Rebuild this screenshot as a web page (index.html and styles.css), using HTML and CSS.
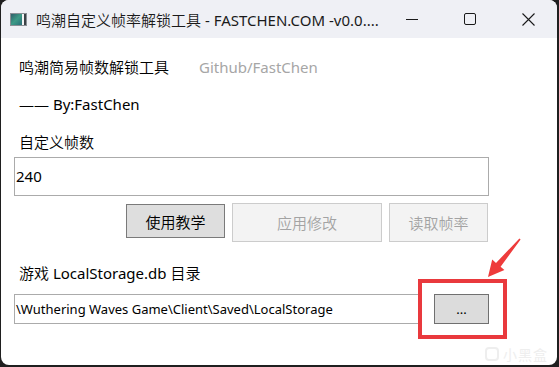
FILE: index.html
```html
<!DOCTYPE html>
<html lang="zh-CN">
<head>
<meta charset="utf-8">
<title>鸣潮自定义帧率解锁工具</title>
<link rel="stylesheet" href="styles.css">
</head>
<body>
<div class="window">
  <div class="titlebar">
    <svg class="appicon" width="17" height="13" viewBox="0 0 17 13">
      <defs>
        <linearGradient id="g1" x1="0" y1="0" x2="1" y2="1">
          <stop offset="0" stop-color="#2f5f6a"/>
          <stop offset="0.5" stop-color="#3c9a86"/>
          <stop offset="1" stop-color="#2a6e79"/>
        </linearGradient>
      </defs>
      <rect x="0.5" y="0.5" width="16" height="12" fill="#f4f4f4" stroke="#8a8f95"/>
      <rect x="1" y="1" width="11" height="11" fill="url(#g1)"/>
      <rect x="14" y="1" width="2" height="11" fill="#3b4146"/>
    </svg>
    <span class="title"><span class="zh">鸣潮自定义帧率解锁工具</span> - FASTCHEN.COM -v0.0....</span>
    <div class="caption">
      <span class="cbtn"><svg width="12" height="12" viewBox="0 0 12 12"><path d="M0 6.5H12" stroke="#1a1a1a" stroke-width="1"/></svg></span>
      <span class="cbtn"><svg width="12" height="12" viewBox="0 0 12 12"><rect x="0.5" y="0.5" width="11" height="11" rx="1.5" fill="none" stroke="#1a1a1a" stroke-width="1"/></svg></span>
      <span class="cbtn"><svg width="13" height="13" viewBox="0 0 13 13"><path d="M0.5 0.5L12.5 12.5M12.5 0.5L0.5 12.5" stroke="#1a1a1a" stroke-width="1.1"/></svg></span>
    </div>
  </div>
  <div class="content">
    <div class="row1"><span class="label zh">鸣潮简易帧数解锁工具</span><span class="link">Github/FastChen</span></div>
    <div class="label by"><span class="zh">——</span> By:FastChen</div>
    <div class="label fps-label zh">自定义帧数</div>
    <div class="fps-input">240</div>
    <div class="btn-row">
      <button class="btn primary zh">使用教学</button>
      <button class="btn disabled wide zh">应用修改</button>
      <button class="btn disabled zh">读取帧率</button>
    </div>
    <div class="label dir-label"><span class="zh">游戏</span> LocalStorage.db <span class="zh">目录</span></div>
    <div class="path-row">
      <div class="path-input">\Wuthering Waves Game\Client\Saved\LocalStorage</div>
      <button class="btn browse">...</button>
    </div>
    <div class="highlight"></div>
    <svg class="arrow" width="48" height="50" viewBox="0 0 48 50">
      <polygon points="8,45 12.2,27.6 16,30.9 39.4,6.5 40.6,7.5 20.6,34.7 24.4,38" fill="#ee3b3b"/>
    </svg>
    <div class="watermark"><span class="wm-logo"></span>小黑盒</div>
  </div>
</div>
</body>
</html>
```
FILE: styles.css
```css
* { box-sizing: border-box; }
html, body { margin: 0; padding: 0; }
body {
  background: #1f1f1f;
  width: 559px;
  height: 367px;
  overflow: hidden;
  font-family: "Noto Sans", "Noto Sans CJK SC", sans-serif;
  font-weight: 400;
  color: #000;
}
.zh { font-weight: 350; }
.window {
  margin-left: 1px;
  width: 556px;
  height: 365px;
  border-radius: 8px;
  background: #ffffff;
  overflow: hidden;
  display: flex;
  flex-direction: column;
}
.titlebar {
  height: 38px;
  background: #eff0f5;
  display: flex;
  align-items: center;
  flex: none;
}
.appicon { margin-left: 9px; margin-top: 1px; flex: none; }
.title {
  margin-left: 9px;
  font-size: 15px;
  color: #1a1a1a;
  white-space: nowrap;
}
.caption { margin-left: auto; display: flex; height: 38px; }
.cbtn {
  width: 58px;
  height: 38px;
  display: flex;
  align-items: center;
  justify-content: center;
}
.content {
  position: relative;
  flex: 1;
  padding-left: 18px;
  display: flex;
  flex-direction: column;
  align-items: flex-start;
}
.label {
  font-size: 15px;
  line-height: 20px;
  height: 20px;
  white-space: nowrap;
}
.row1 {
  margin-top: 19px;
  display: grid;
  grid-template-columns: 180px auto;
  height: 20px;
}
.link {
  font-size: 15px;
  line-height: 20px;
  color: #a6a6a6;
}
.by { margin-top: 17px; }
.fps-label { margin-top: 18px; }
.fps-input {
  margin-top: 5px;
  margin-left: -5px;
  width: 475px;
  height: 39px;
  border: 1px solid #ababab;
  background: #fff;
  font-size: 15px;
  line-height: 37px;
  padding-left: 1px;
}
.btn-row {
  margin-top: 7px;
  margin-left: 107px;
  display: flex;
  align-items: flex-start;
  gap: 7px;
}
.btn {
  font-family: inherit;
  font-size: 15px;
  padding: 0;
  margin: 0;
  height: 39px;
  width: 99px;
  border: 1px solid #adadad;
  background: #e1e1e1;
  color: #000;
}
.btn.zh { font-weight: 350; }
.btn.primary {
  height: 34px;
  margin-top: 1px;
  border-color: #7a7a7a;
  background: #dedede;
}
.btn.wide { width: 150px; }
.btn.disabled {
  background: #f3f3f3;
  border-color: #cccccc;
  color: #a3a3a3;
}
.dir-label { margin-top: 21px; }
.path-row {
  margin-top: 11px;
  margin-left: -5px;
  display: flex;
  align-items: flex-start;
}
.path-input {
  width: 407px;
  height: 30px;
  border: 1px solid #ababab;
  font-size: 13px;
  line-height: 28px;
  padding-left: 1px;
  white-space: nowrap;
  overflow: hidden;
}
.btn.browse {
  margin-left: 13px;
  width: 55px;
  height: 30px;
  border-color: #707070;
  background: #dcdcdc;
  font-size: 13px;
  line-height: 26px;
}
.highlight {
  position: absolute;
  left: 417px;
  top: 241px;
  width: 89px;
  height: 60px;
  border: 4px solid #e9393d;
}
.arrow {
  position: absolute;
  left: 479px;
  top: 194px;
}
.watermark {
  position: absolute;
  left: 484px;
  top: 306px;
  display: flex;
  align-items: center;
  gap: 4px;
  font-size: 14px;
  color: #eeeeee;
  letter-spacing: 1px;
}
.wm-logo {
  width: 14px;
  height: 14px;
  border: 2px solid #eeeeee;
  border-radius: 4px;
}
```
